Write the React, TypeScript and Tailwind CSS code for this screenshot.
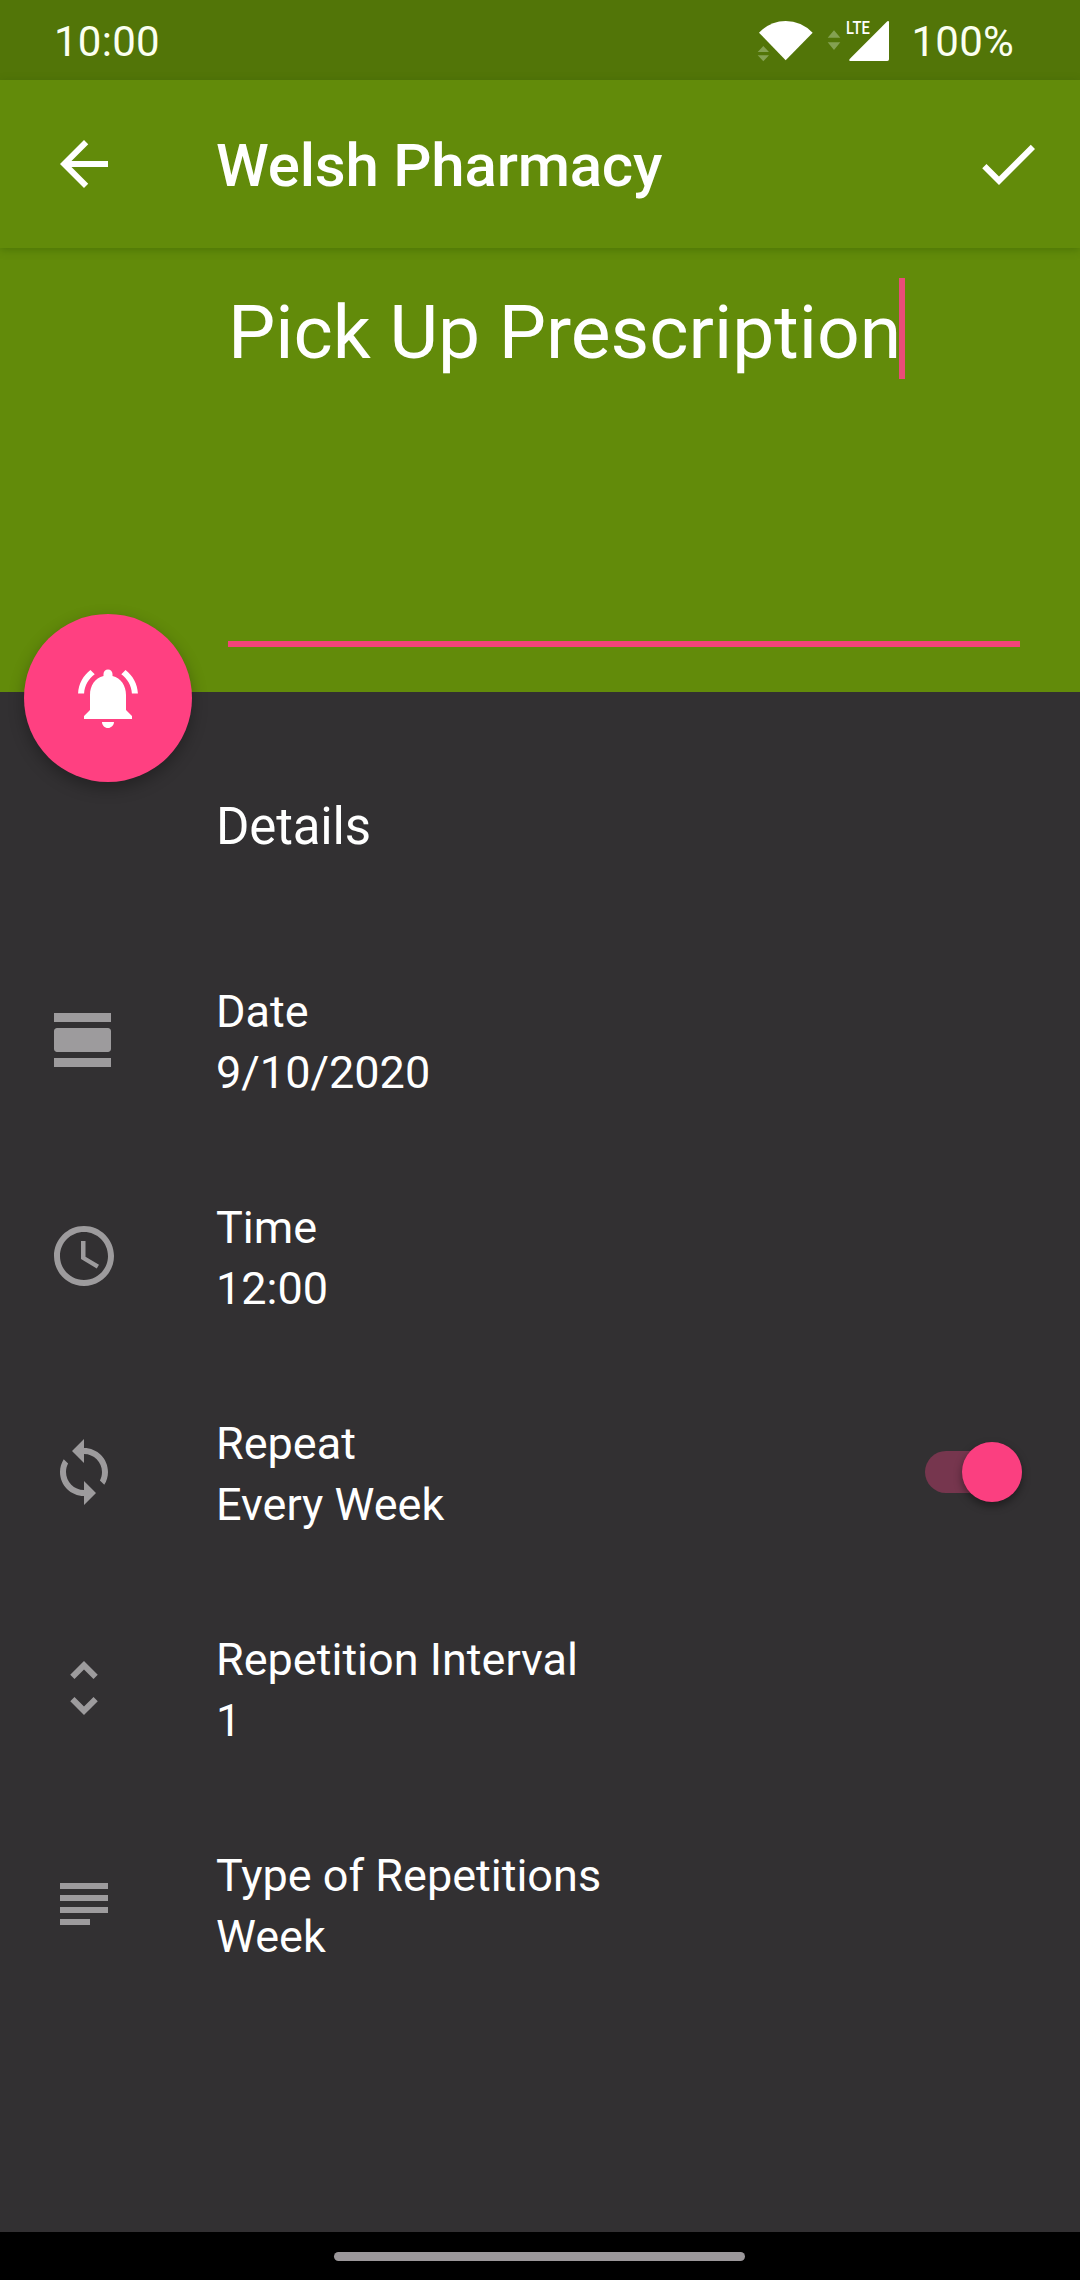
import type { ReactNode } from "react";

type IconProps = { d: string; className?: string };

function Icon({ d, className = "" }: IconProps) {
  return (
    <svg viewBox="0 0 24 24" className={`size-[72px] shrink-0 ${className}`} fill="currentColor" aria-hidden="true">
      <path d={d} />
    </svg>
  );
}

const paths = {
  back: "M20 11H7.83l5.59-5.59L12 4l-8 8 8 8 1.41-1.41L7.83 13H20v-2z",
  check: "M9 16.17L4.83 12l-1.42 1.41L9 19 21 7l-1.41-1.41z",
  bell: "M7.58 4.08L6.15 2.65C3.75 4.48 2.17 7.3 2.03 10.5h2c.15-2.65 1.51-4.97 3.55-6.42zm12.39 6.42h2c-.15-3.2-1.73-6.02-4.12-7.85l-1.42 1.43c2.02 1.45 3.39 3.77 3.54 6.42zM18 11c0-3.07-1.64-5.64-4.5-6.32V4c0-.83-.67-1.5-1.5-1.5s-1.5.67-1.5 1.5v.68C7.63 5.36 6 7.92 6 11v5l-2 2v1h16v-1l-2-2v-5zm-6 11c.14 0 .27-.01.4-.04.65-.14 1.18-.58 1.44-1.18.1-.24.15-.5.15-.78h-4c.01 1.1.9 2 2.01 2z",
  day: "M2 21h19v-3H2v3zM20 8H3c-.55 0-1 .45-1 1v6c0 .55.45 1 1 1h17c.55 0 1-.45 1-1V9c0-.55-.45-1-1-1zM2 3v3h19V3H2z",
  clock: "M11.99 2C6.47 2 2 6.48 2 12s4.47 10 9.99 10C17.52 22 22 17.52 22 12S17.52 2 11.99 2zM12 20c-4.42 0-8-3.58-8-8s3.58-8 8-8 8 3.58 8 8-3.58 8-8 8zm.5-13H11v6l5.25 3.15.75-1.23-4.5-2.67z",
  sync: "M12 4V1L8 5l4 4V6c3.31 0 6 2.69 6 6 0 1.01-.25 1.97-.7 2.8l1.46 1.46C19.54 15.03 20 13.57 20 12c0-4.42-3.58-8-8-8zm0 14c-3.31 0-6-2.69-6-6 0-1.01.25-1.97.7-2.8L5.24 7.74C4.46 8.97 4 10.43 4 12c0 4.42 3.58 8 8 8v3l4-4-4-4v3z",
  unfold: "M12 5.83L15.17 9l1.41-1.41L12 3 7.41 7.59 8.83 9 12 5.83zm0 12.34L8.83 15l-1.41 1.41L12 21l4.59-4.59L15.17 15 12 18.17z",
  subject: "M14 17H4v2h10v-2zm6-8H4v2h16V9zM4 15h16v-2H4v2zM4 5v2h16V5H4z",
};

function StatusBar() {
  return (
    <div className="flex h-20 items-center bg-[#527508] pr-[66px] pl-[54px] text-[42px] leading-[49px] tracking-[0.25px] text-[#fbfff0]">
      <span className="mt-0.5">10:00</span>
      <div className="relative mt-0.5 ml-auto h-[46px] w-[136px]">
        <svg viewBox="108 54 408 138" className="h-[46px] w-[136px]" aria-hidden="true">
          <g fill="#84a152">
            <path d="M113 156L130 138L147 156zM113 166H147L130 184z" />
            <path d="M323 113L342 91L361 113zM323 127H361L342 150z" />
          </g>
          <g fill="#fff">
            <path d="M117 98Q151 63 197 63Q243 63 278 98L197 181z" />
            <path d="M502 64Q507 61 507 67V178Q507 183 502 183H390Q385 182 389 177z" />
          </g>
        </svg>
        <span className="absolute top-[-1px] left-[90px] origin-left scale-x-[0.82] text-[18px] leading-[21px] font-medium text-white">
          LTE
        </span>
      </div>
      <span className="mt-0.5 ml-[19px]">100%</span>
    </div>
  );
}

function Row({ icon, title, value, children }: { icon: string; title: string; value: string; children?: ReactNode }) {
  return (
    <div className="flex h-[216px] items-center pr-[58px] pl-12">
      <Icon d={icon} className="text-[#9d9b9d]" />
      <div className="mt-1 ml-24 flex-1 text-[45px] leading-[61px]">
        <div>{title}</div>
        <div>{value}</div>
      </div>
      {children}
    </div>
  );
}

function Switch() {
  return (
    <div className="mb-px flex h-[42px] w-[97px] items-center justify-end rounded-full bg-[#76364e]">
      <div className="size-[60px] shrink-0 rounded-full bg-[#fb3f80] shadow-[0_4px_8px_rgba(0,0,0,0.4)]" />
    </div>
  );
}

export default function App() {
  return (
    <div className="flex h-[2280px] w-[1080px] flex-col overflow-hidden bg-[#323032] font-['Roboto',sans-serif] text-white">
      <StatusBar />
      <header className="z-10 flex h-[168px] items-center bg-[#628b0a] pr-9 pl-12 shadow-[0_2px_8px_rgba(50,90,0,0.45)]">
        <Icon d={paths.back} />
        <h1 className="mt-1 ml-24 flex-1 text-[60px] leading-[70px] font-medium tracking-[-0.2px]">Welsh Pharmacy</h1>
        <Icon d={paths.check} />
      </header>
      <section className="relative flex h-[444px] flex-col bg-[#628b0a] pr-[60px] pl-[228px]">
        <div className="mt-[30px] flex h-[101px] items-center">
          <span className="pt-2 text-[75px] leading-[93px] whitespace-nowrap">Pick Up Prescription</span>
          <span className="-ml-0.5 h-[101px] w-1.5 bg-[#ea4c78]" />
        </div>
        <div className="mt-[262px] h-1.5 bg-[#f4437a]" />
        <button
          type="button"
          className="absolute bottom-[-90px] left-6 flex size-[168px] items-center justify-center rounded-full bg-[#ff4081] shadow-[0_6px_16px_rgba(0,0,0,0.3)]"
        >
          <Icon d={paths.bell} />
        </button>
      </section>
      <main className="flex-1">
        <h2 className="h-60 pt-[105px] pl-[216px] text-[51px] leading-[60px] tracking-[-0.15px]">Details</h2>
        <Row icon={paths.day} title="Date" value="9/10/2020" />
        <Row icon={paths.clock} title="Time" value="12:00" />
        <Row icon={paths.sync} title="Repeat" value="Every Week">
          <Switch />
        </Row>
        <Row icon={paths.unfold} title="Repetition Interval" value="1" />
        <Row icon={paths.subject} title="Type of Repetitions" value="Week" />
      </main>
      <footer className="flex h-12 items-center justify-center bg-black pr-px">
        <div className="h-[9px] w-[411px] rounded-full bg-[#9b979a]" />
      </footer>
    </div>
  );
}
